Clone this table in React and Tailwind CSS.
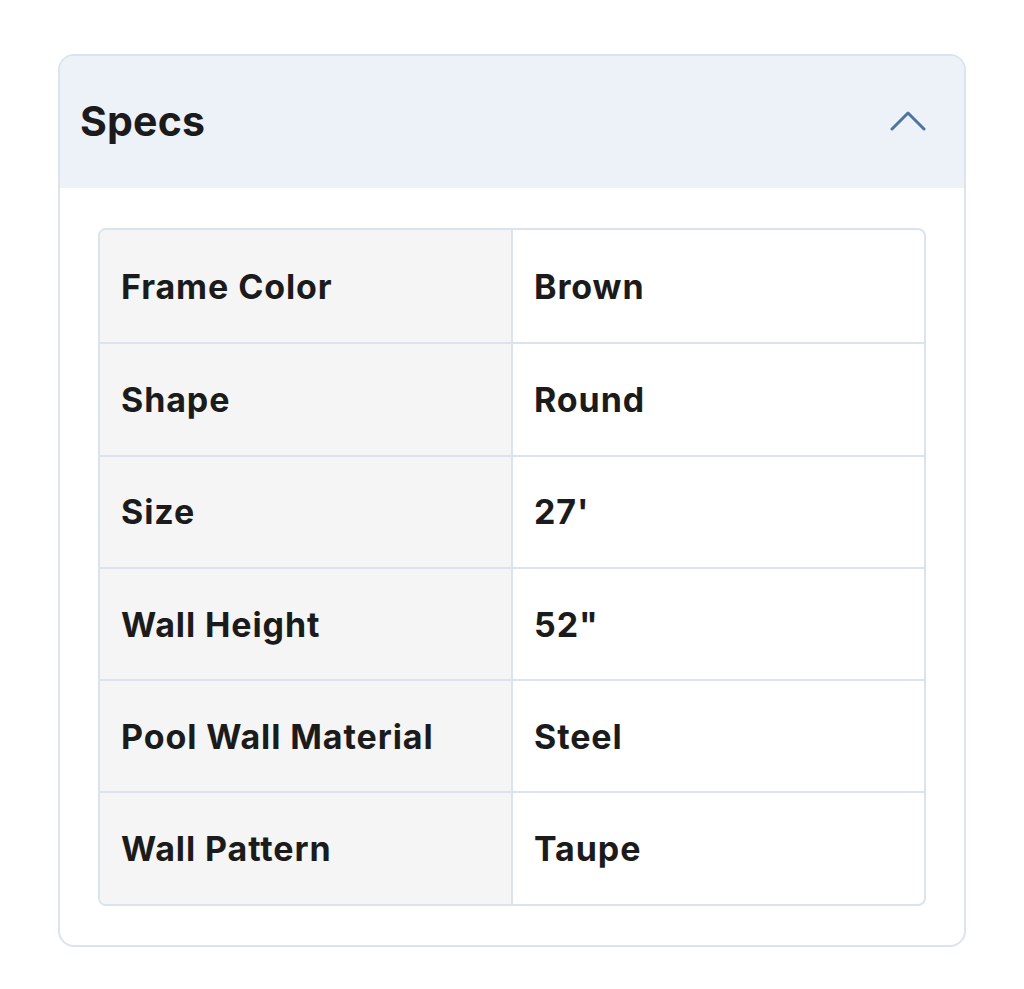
const specs = [
  ["Frame Color", "Brown"],
  ["Shape", "Round"],
  ["Size", "27'"],
  ["Wall Height", '52"'],
  ["Pool Wall Material", "Steel"],
  ["Wall Pattern", "Taupe"],
];

export default function App() {
  return (
    <div className="min-h-screen w-full bg-white pt-[54px] pl-[58px]" style={{ fontFamily: "Inter, 'Noto Sans', sans-serif" }}>
      <div className="w-[908px] rounded-[16px] border-2 border-[#dae3ee] overflow-hidden">
        <div className="h-[132px] bg-[#edf1f8] flex items-center justify-between pl-[20px] pr-[38px]">
          <h2 className="text-[41px] font-bold text-[#1b1b1b] tracking-[0.2px]">Specs</h2>
          <svg width="36" height="22" viewBox="0 0 36 22" fill="none" className="mt-[-2px]">
            <polyline points="2,19 18,3 34,19" stroke="#4d73a0" strokeWidth="3" strokeLinecap="round" strokeLinejoin="round" />
          </svg>
        </div>
        <div className="px-[38px] pt-[40px] pb-[39px]">
          <div className="rounded-[8px] border-2 border-[#dae3ee] overflow-hidden">
            {specs.map(([label, value], i) => (
              <div key={label} className={`flex h-[112.3px] ${i > 0 ? "border-t-2 border-[#dae3ee]" : ""}`}>
                <div className="w-[413px] bg-[#f5f5f5] border-r-2 border-[#dae3ee] flex items-center pl-[21px] text-[34px] font-bold tracking-[0.9px] text-[#1b1b1b]">
                  {label}
                </div>
                <div className="flex-1 flex items-center pl-[21px] text-[34px] font-bold tracking-[0.9px] text-[#1b1b1b]">
                  {value}
                </div>
              </div>
            ))}
          </div>
        </div>
      </div>
    </div>
  );
}
